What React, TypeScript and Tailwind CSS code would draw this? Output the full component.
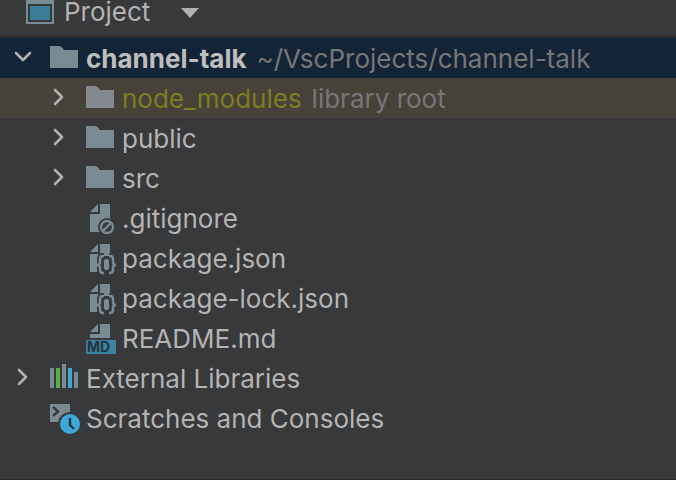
import { useState } from "react";
import type { ReactNode } from "react";
import clsx from "clsx";

const Chevron = ({ open }: { open?: boolean }) => (
  <svg viewBox="0 0 20 20" className="w-5 h-5 shrink-0" fill="none" stroke="#afb1b3" strokeWidth="2.6" strokeLinecap="round" strokeLinejoin="round">
    <path d={open ? "M4 5L11 12L18 5" : "M7 2L14 9L7 16"} />
  </svg>
);

const FolderIcon = ({ color = "#7b8b94" }: { color?: string }) => (
  <svg viewBox="0 0 32 32" className="w-8 h-8 shrink-0" fill={color}>
    <path d="M2 4H11Q13 4 14.500 6L16 8H30V26H2Z" />
  </svg>
);

const Page = () => (
  <path d="M6 10L14 2V10ZM16 2H26V30H6V12H16Z" fill="#7b8b94" />
);

const IgnoredIcon = () => (
  <svg viewBox="0 0 32 32" className="w-8 h-8 shrink-0" fill="none">
    <Page />
    <circle cx="23" cy="25" r="9" fill="#37393b" />
    <circle cx="23" cy="25" r="6" stroke="#7b8b94" strokeWidth="2.4" />
    <path d="M19 29L27 21" stroke="#7b8b94" strokeWidth="2.4" />
  </svg>
);

const bracePath = "M20 14H19Q16 14 16 17V20Q16 23 13 23Q16 23 16 26V28Q16 31 19 31H20M25 14H26Q29 14 29 17V20Q29 23 32 23Q29 23 29 26V28Q29 31 26 31H25";

const JsonIcon = () => (
  <svg viewBox="0 0 32 32" className="w-8 h-8 shrink-0 overflow-visible" fill="none">
    <Page />
    <path d={bracePath} stroke="#37393b" strokeWidth="6" />
    <rect x="18" y="14" width="9" height="17" fill="#37393b" />
    <path d={bracePath} stroke="#7b8b94" strokeWidth="2.4" />
    <rect x="20" y="17" width="5" height="11" rx="2" fill="#7b8b94" />
  </svg>
);

const MarkdownIcon = () => (
  <svg viewBox="0 0 32 32" className="w-8 h-8 shrink-0">
    <path d="M6 10L14 2V10ZM16 2H26V16H6V12H16Z" fill="#7b8b94" />
    <rect x="2" y="18" width="30" height="14" fill="#3a83a1" />
    <text x="3" y="30" fill="#26343d" className="font-['Inter'] font-bold text-[14px]">MD</text>
  </svg>
);

const LibrariesIcon = () => (
  <svg viewBox="0 0 32 32" className="w-8 h-8 shrink-0">
    <path d="M2 6H6V26H2ZM14 2H18V26H14ZM26 10H30V26H26Z" fill="#7b8b94" />
    <path d="M8 6H12V26H8Z" fill="#5fae45" />
    <path d="M20 6H24V26H20Z" fill="#3da9d8" />
  </svg>
);

const ScratchesIcon = () => (
  <svg viewBox="0 0 32 32" className="w-8 h-8 shrink-0" fill="none">
    <path d="M2 2H22V20H2Z" fill="#7b8b94" />
    <path d="M5 5L10 9.500L5 14" stroke="#37393b" strokeWidth="2.4" />
    <circle cx="22" cy="22" r="12" fill="#37393b" />
    <circle cx="22" cy="22" r="10" fill="#3da9d8" />
    <path d="M22 16V23L26 27" stroke="#263238" strokeWidth="2.4" />
  </svg>
);

const WindowIcon = () => (
  <svg viewBox="0 0 32 24" className="w-8 h-6 shrink-0">
    <path d="M2 0H30V24H2Z" fill="#7b8b94" />
    <path d="M4 4H28V22H4Z" fill="#37393b" />
    <path d="M6 6H26V20H6Z" fill="#3b7f99" />
  </svg>
);

type Node = {
  name: string;
  hint?: string;
  level: number;
  icon: ReactNode;
  expandable?: boolean;
  rowClass?: string;
  nameClass?: string;
};

const nodes: Node[] = [
  { name: "channel-talk", hint: "~/VscProjects/channel-talk", level: 0, icon: <FolderIcon />, expandable: true, rowClass: "bg-[#122436]", nameClass: "font-bold text-[#bebebe]" },
  { name: "node_modules", hint: "library root", level: 1, icon: <FolderIcon color="#83898f" />, expandable: true, rowClass: "bg-[#464239]", nameClass: "text-[#7e7d20]" },
  { name: "public", level: 1, icon: <FolderIcon />, expandable: true },
  { name: "src", level: 1, icon: <FolderIcon />, expandable: true },
  { name: ".gitignore", level: 1, icon: <IgnoredIcon /> },
  { name: "package.json", level: 1, icon: <JsonIcon /> },
  { name: "package-lock.json", level: 1, icon: <JsonIcon /> },
  { name: "README.md", level: 1, icon: <MarkdownIcon /> },
  { name: "External Libraries", level: 0, icon: <LibrariesIcon />, expandable: true },
  { name: "Scratches and Consoles", level: 0, icon: <ScratchesIcon /> },
];

export default function App() {
  const [selected, setSelected] = useState("channel-talk");

  return (
    <div className="flex flex-col min-h-screen bg-[#37393b] border-b border-[#30292d] font-['Inter',sans-serif] text-[26px] text-[#b4b4b4]">
      <header className="flex items-start h-[38px] pl-6 border-b-2 border-[#2c2d2f]">
        <button className="flex items-start gap-2">
          <WindowIcon />
          <span className="leading-6">Project</span>
          <svg viewBox="0 0 20 20" className="w-5 h-5 ml-[22px]" fill="#afb1b3">
            <path d="M1 8H19L10 18Z" />
          </svg>
        </button>
      </header>
      <ul className="flex flex-col">
        {nodes.map((node) => (
          <li key={node.name}>
            <button
              onClick={() => setSelected(node.name)}
              aria-current={selected === node.name}
              className={clsx("flex items-center w-full h-10 whitespace-nowrap text-left", node.level === 0 ? "pl-3" : "pl-12", node.rowClass)}
            >
              <span className="flex w-9 shrink-0">
                {node.expandable && <Chevron open={node.name === "channel-talk"} />}
              </span>
              {node.icon}
              <span className={clsx("ml-1.5", node.nameClass)}>{node.name}</span>
              {node.hint && <span className="ml-2.5 text-[#777777]">{node.hint}</span>}
            </button>
          </li>
        ))}
      </ul>
    </div>
  );
}
